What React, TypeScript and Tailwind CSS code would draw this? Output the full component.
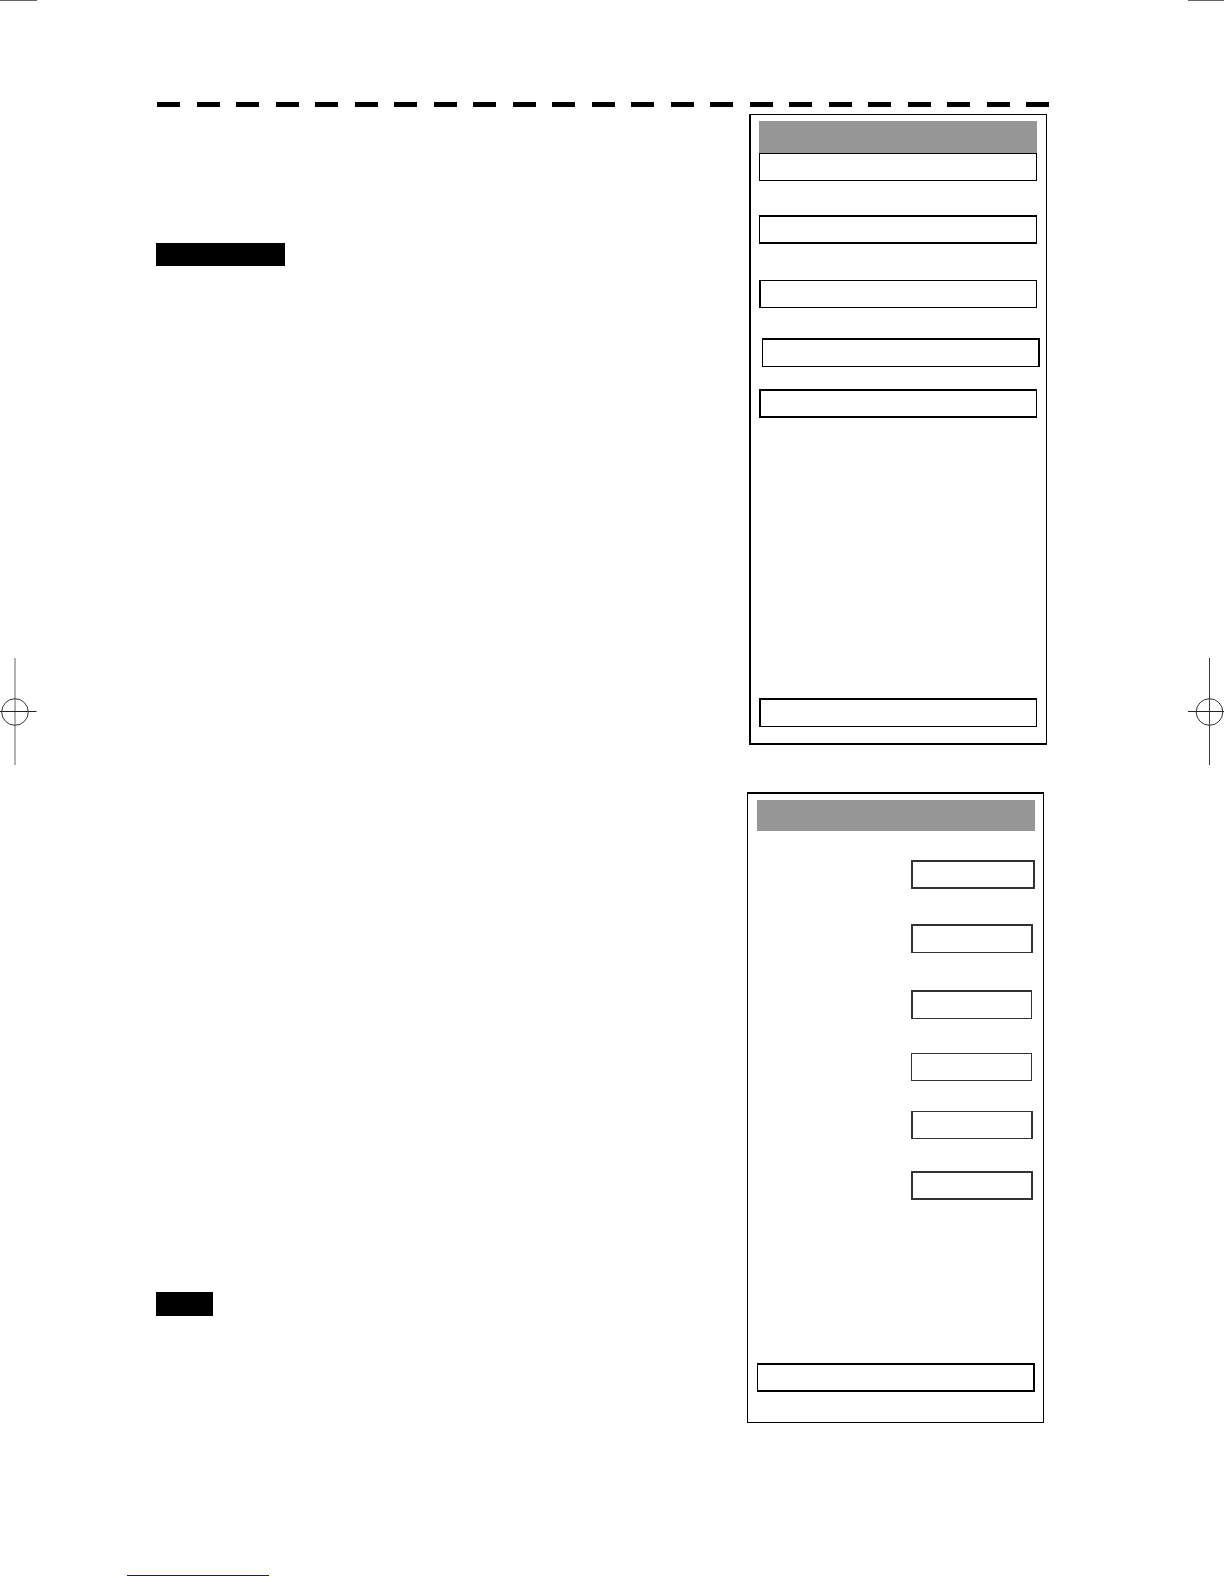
import React from "react";

const DASHES = Array.from({ length: 23 }, (_, i) => i);

type Field = { label: string; style: string };

const MENU_FIELDS: Field[] = [
  { label: "Menu item 1", style: "h-[28px] border" },
  { label: "Menu item 2", style: "mt-[34px] h-[29px] border-x border-y-2" },
  { label: "Menu item 3", style: "mt-[36px] h-[28px] border border-l-2" },
  { label: "Menu item 4", style: "mt-[30px] -mr-[3px] ml-[3px] h-[29px] border border-t-2 border-r-2" },
  { label: "Menu item 5", style: "mt-[22px] h-[29px] border-y-2 border-l-2 border-r" },
  { label: "Menu item 6", style: "mt-[280px] h-[29px] border border-t-2 border-l-2" },
];

const VALUE_FIELDS: Field[] = [
  { label: "Value 1", style: "mt-[29px] h-[29px] w-[124px] border-2" },
  { label: "Value 2", style: "mt-[35px] mr-[2px] h-[29px] w-[122px] border-2 border-b" },
  { label: "Value 3", style: "mt-[37px] mr-[3px] h-[29px] w-[121px] border border-t-2 border-l-2" },
  { label: "Value 4", style: "mt-[34px] mr-[3px] h-[28px] w-[121px] border" },
  { label: "Value 5", style: "mt-[30px] mr-[2px] h-[28px] w-[122px] border-x-2 border-y" },
  { label: "Value 6", style: "mt-[32px] mr-[2px] h-[29px] w-[122px] border-2" },
];

function LeftRegistration() {
  return (
    <svg className="mt-[657px] block" width="37" height="107" viewBox="0 0 37 107" fill="none" aria-hidden="true">
      <path d="M15 0V107" stroke="#666" />
      <path d="M0 53.5H36.5" stroke="#222" />
      <circle cx="15" cy="54" r="13.3" stroke="#333" />
    </svg>
  );
}

function RightRegistration() {
  return (
    <svg className="mt-[657px] block" width="36" height="107" viewBox="0 0 36 107" fill="none" aria-hidden="true">
      <path d="M21.5 0V107" stroke="#3a3a3a" />
      <path d="M0 53.5H36" stroke="#222" />
      <circle cx="21.5" cy="54" r="13.3" stroke="#333" />
    </svg>
  );
}

function DashedRule() {
  return (
    <div className="ml-px flex h-[5px] justify-between">
      {DASHES.map((i) => (
        <span key={i} className="w-[23px] bg-black" />
      ))}
    </div>
  );
}

function MenuPanel() {
  return (
    <section className="mr-[2px] flex w-[298px] flex-col border border-b-2 border-l-2 border-black pt-[6px] pr-[9px] pb-[16px] pl-[8px]">
      <header className="h-[32px] bg-[#969696]" />
      {MENU_FIELDS.map((f) => (
        <button key={f.label} type="button" aria-label={f.label} className={`border-black ${f.style}`} />
      ))}
    </section>
  );
}

function ValuePanel() {
  return (
    <section className="mt-[47px] mr-[5px] flex w-[297px] flex-col items-end border border-t-2 border-black pt-[6px] pr-[8px] pb-[30px] pl-[9px]">
      <header className="h-[31px] w-full bg-[#969696]" />
      {VALUE_FIELDS.map((f) => (
        <button key={f.label} type="button" aria-label={f.label} className={`border-[#333132] ${f.style}`} />
      ))}
      <button
        type="button"
        aria-label="Close"
        className="mt-[163px] h-[29px] w-full border-y-2 border-r-2 border-l border-black"
      />
    </section>
  );
}

export default function App() {
  return (
    <div className="bg-white">
      <div className="flex">
        <div className="flex w-[156px] shrink-0 flex-col items-start">
          <div className="h-px w-[37px] bg-[#666]" />
          <LeftRegistration />
        </div>

        <main className="min-w-0 flex-1 pt-[102px]">
          <DashedRule />
          <div className="flex justify-between">
            <div className="flex flex-col items-start pt-[136px]">
              <div className="h-[23px] w-[129px] bg-black" />
              <div className="mt-[1026px] h-[24px] w-[57px] bg-black" />
            </div>
            <div className="flex flex-col items-end pt-[7px]">
              <MenuPanel />
              <ValuePanel />
            </div>
          </div>
        </main>

        <div className="flex w-[175px] shrink-0 flex-col items-end">
          <div className="h-px w-[36px] bg-[#666]" />
          <RightRegistration />
        </div>
      </div>

      <footer className="pt-[144px] pb-[8px] pl-[127px]">
        <a href="#top" aria-label="Back to top" className="flex h-[9px] w-[142px] items-end">
          <span className="h-px w-full bg-[#15158c]" />
        </a>
      </footer>
    </div>
  );
}
